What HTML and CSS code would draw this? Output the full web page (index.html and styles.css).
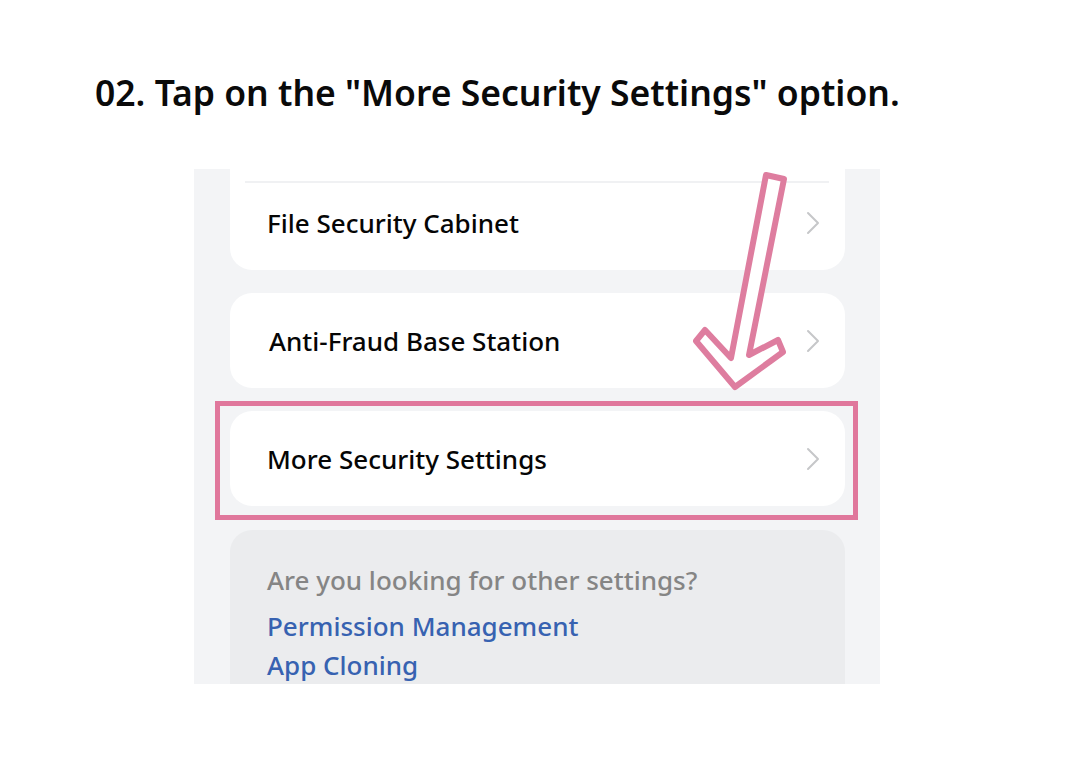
FILE: index.html
```html
<!DOCTYPE html>
<html>
<head>
<meta charset="utf-8">
<link rel="stylesheet" href="styles.css">
</head>
<body>
<h1 class="title">02. Tap on the "More Security Settings" option.</h1>
<div class="shot">
  <div class="list">
    <div class="card card-first">
      <div class="sep"></div>
      <div class="row"><span class="label">File Security Cabinet</span><svg class="chev" viewBox="0 0 16 26"><path d="M3 3 L13 13 L3 23" /></svg></div>
    </div>
    <div class="card"><div class="row"><span class="label label-shift">Anti-Fraud Base Station</span><svg class="chev" viewBox="0 0 16 26"><path d="M3 3 L13 13 L3 23" /></svg></div></div>
    <div class="card"><div class="row"><span class="label">More Security Settings</span><svg class="chev" viewBox="0 0 16 26"><path d="M3 3 L13 13 L3 23" /></svg></div></div>
    <div class="other">
      <div class="q">Are you looking for other settings?</div>
      <div class="link">Permission Management</div>
      <div class="link">App Cloning</div>
    </div>
  </div>
  <div class="highlight"></div>
  <svg class="arrow" viewBox="0 0 686 515" width="686" height="515">
    <polygon points="572,6 590,10 555,186 584,171 589,183 541,218 502,172 511,161 537,189" />
  </svg>
</div>
</body>
</html>
```
FILE: styles.css
```css
html, body {
  margin: 0;
  padding: 0;
  background: #ffffff;
}
body {
  width: 1080px;
  height: 760px;
  font-family: "Noto Sans", "Open Sans", sans-serif;
  overflow: hidden;
}
.title {
  margin: 0;
  padding: 68px 0 0 95px;
  height: 169px;
  box-sizing: border-box;
  font-size: 35.5px;
  font-weight: 600;
  color: #0a0a0a;
  line-height: 48px;
  white-space: nowrap;
}
.shot {
  position: relative;
  margin-left: 194px;
  width: 686px;
  height: 515px;
  background: #f3f4f6;
  overflow: hidden;
}
.list {
  display: flex;
  flex-direction: column;
  gap: 23px;
  padding-left: 36px;
  width: 615px;
}
.card {
  background: #ffffff;
  border-radius: 22px;
  height: 95px;
  display: flex;
  flex-direction: column;
  justify-content: center;
}
.card-first {
  height: 101px;
  border-radius: 0 0 22px 22px;
  justify-content: flex-start;
}
.sep {
  margin: 12px 16px 0 15px;
  height: 2px;
  background: #f0f1f3;
}
.card-first .row {
  height: 80px;
}
.row {
  display: flex;
  align-items: center;
  justify-content: space-between;
  padding: 0 24px 0 37px;
}
.label {
  font-size: 26px;
  font-weight: 500;
  color: #050505;
}
.label-shift {
  margin-left: 2px;
}
.chev {
  width: 16px;
  height: 26px;
  fill: none;
  stroke: #c6c7c9;
  stroke-width: 2;
  stroke-linecap: round;
  stroke-linejoin: round;
}
.other {
  margin-top: 1px;
  background: #ebecee;
  border-radius: 22px 22px 0 0;
  height: 160px;
  padding: 32px 0 0 37px;
  box-sizing: border-box;
}
.q {
  font-size: 26px;
  font-weight: 500;
  color: #858585;
  line-height: 36px;
}
.link {
  font-size: 26px;
  font-weight: 500;
  color: #3762b1;
  line-height: 39px;
}
.q + .link {
  margin-top: 9px;
}
.highlight {
  position: absolute;
  left: 21px;
  top: 232px;
  width: 643px;
  height: 119px;
  box-sizing: border-box;
  border: 5px solid #e0779c;
}
.arrow {
  position: absolute;
  left: 0;
  top: 0;
}
.arrow polygon {
  fill: #ffffff;
  stroke: #de7d9f;
  stroke-width: 6;
  stroke-linejoin: round;
}
```
